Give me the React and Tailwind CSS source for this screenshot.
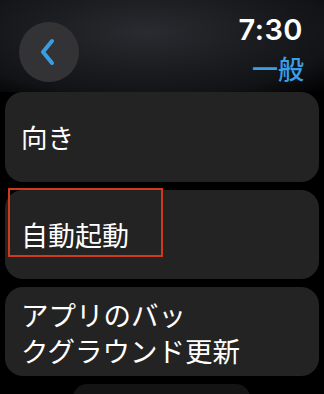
import React from "react";

export default function App() {
  const jp = { fontFamily: '"Noto Sans CJK JP", "Noto Sans", sans-serif' };
  return (
    <div className="relative w-[324px] h-[394px] overflow-hidden bg-black" style={jp}>
      <div className="h-[92px] flex justify-between items-start bg-[radial-gradient(ellipse_at_45%_35%,#2a2b30_0%,#1b1c20_45%,#121316_75%,#000_100%)]">
        <div className="ml-[19px] mt-[22px] w-[60px] h-[60px] rounded-full bg-[#333336] flex items-center justify-center">
          <svg width="20" height="28" viewBox="0 0 20 28" className="ml-[-3px]">
            <path d="M14 3 L5 14 L14 25" fill="none" stroke="#3a9de2" strokeWidth="4" strokeLinecap="round" strokeLinejoin="round" />
          </svg>
        </div>
        <div className="pr-[21px] pt-[12px] flex flex-col items-end">
          <div className="text-white text-[29px] font-semibold leading-[36px] tracking-[0.5px]" style={{ fontFamily: 'Inter, "Liberation Sans", sans-serif' }}>7:30</div>
          <div className="text-[#3a9fe6] text-[26px] font-medium leading-[32px] mt-[4px] mr-[-1px]">一般</div>
        </div>
      </div>
      <div className="px-[5px] flex flex-col gap-[8px]">
        <div className="h-[90px] rounded-[18px] bg-[#232323] px-[16px] flex items-center">
          <span className="text-white text-[26.5px] leading-[36px]">向き</span>
        </div>
        <div className="h-[89px] rounded-[18px] bg-[#232323] px-[16px] flex items-center">
          <span className="text-white text-[27px] leading-[36px]">自動起動</span>
        </div>
        <div className="h-[89px] rounded-[18px] bg-[#232323] px-[16px] flex items-center">
          <span className="text-white text-[27.5px] leading-[36px]">アプリのバッ<br />クグラウンド更新</span>
        </div>
        <div className="ml-[68px] w-[177px] h-[20px] rounded-t-[14px] bg-[#141414]" />
      </div>
      <div className="absolute left-[8px] top-[188px] w-[155px] h-[69px] border-2 border-[#cf3a1e]" />
    </div>
  );
}
